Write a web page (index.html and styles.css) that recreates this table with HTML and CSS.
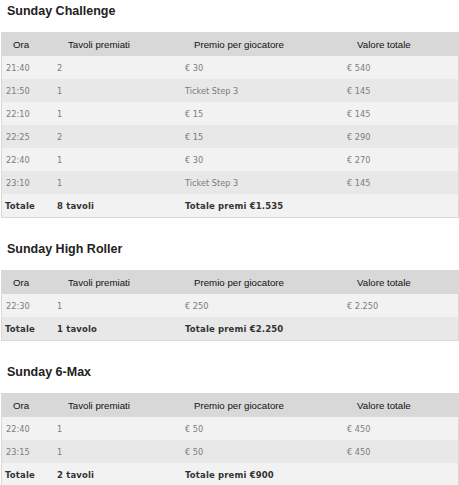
FILE: index.html
```html
<!DOCTYPE html>
<html lang="it">
<head>
<meta charset="utf-8">
<title>Sunday</title>
<link rel="stylesheet" href="styles.css">
</head>
<body>
<section class="block">
  <h2 class="title">Sunday Challenge</h2>
  <div class="tbl">
    <div class="row head"><span>Ora</span><span>Tavoli premiati</span><span>Premio per giocatore</span><span>Valore totale</span></div>
    <div class="row"><span>21:40</span><span>2</span><span>€ 30</span><span>€ 540</span></div>
    <div class="row"><span>21:50</span><span>1</span><span>Ticket Step 3</span><span>€ 145</span></div>
    <div class="row"><span>22:10</span><span>1</span><span>€ 15</span><span>€ 145</span></div>
    <div class="row"><span>22:25</span><span>2</span><span>€ 15</span><span>€ 290</span></div>
    <div class="row"><span>22:40</span><span>1</span><span>€ 30</span><span>€ 270</span></div>
    <div class="row"><span>23:10</span><span>1</span><span>Ticket Step 3</span><span>€ 145</span></div>
    <div class="row total"><span>Totale</span><span>8 tavoli</span><span>Totale premi €1.535</span><span></span></div>
  </div>
</section>
<section class="block">
  <h2 class="title">Sunday High Roller</h2>
  <div class="tbl">
    <div class="row head"><span>Ora</span><span>Tavoli premiati</span><span>Premio per giocatore</span><span>Valore totale</span></div>
    <div class="row"><span>22:30</span><span>1</span><span>€ 250</span><span>€ 2.250</span></div>
    <div class="row total"><span>Totale</span><span>1 tavolo</span><span>Totale premi €2.250</span><span></span></div>
  </div>
</section>
<section class="block">
  <h2 class="title">Sunday 6-Max</h2>
  <div class="tbl">
    <div class="row head"><span>Ora</span><span>Tavoli premiati</span><span>Premio per giocatore</span><span>Valore totale</span></div>
    <div class="row"><span>22:40</span><span>1</span><span>€ 50</span><span>€ 450</span></div>
    <div class="row"><span>23:15</span><span>1</span><span>€ 50</span><span>€ 450</span></div>
    <div class="row total"><span>Totale</span><span>2 tavoli</span><span>Totale premi €900</span><span></span></div>
  </div>
</section>
</body>
</html>
```

FILE: styles.css
```css
html, body {
  margin: 0;
  padding: 0;
  background: #ffffff;
}
body {
  padding-top: 3px;
  overflow: hidden;
  font-family: "DejaVu Sans", Verdana, sans-serif;
}
.block {
  margin-bottom: 23px;
}
.title {
  margin: 0 0 13px 0;
  padding-left: 7px;
  font-family: "Liberation Sans", Arial, sans-serif;
  font-weight: bold;
  font-size: 12.5px;
  line-height: 16px;
  color: #222222;
}
.tbl {
  margin-left: 1px;
  border: 1px solid #d9d9d9;
  border-top: 0;
}
.row {
  display: grid;
  grid-template-columns: 52px 128px 162px 1fr;
  height: 23px;
  align-items: center;
  font-size: 8.2px;
  color: #7c7c7c;
  background: #f3f2f2;
}
.row:nth-child(odd) {
  background: #e8e8e8;
}
.row span {
  padding-left: 3px;
  white-space: nowrap;
}
.row span:nth-child(1) {
  padding-left: 4px;
}
.row.head {
  height: 24px;
  background: #d8d8d8;
  font-family: "Liberation Sans", Arial, sans-serif;
  font-size: 9.7px;
  color: #111111;
}
.row.head span:nth-child(1) { padding-left: 11px; }
.row.head span:nth-child(2) { padding-left: 14px; }
.row.head span:nth-child(3) { padding-left: 12px; }
.row.head span:nth-child(4) { padding-left: 13px; }
.row.total {
  font-weight: bold;
  font-size: 8.5px;
  letter-spacing: 0.15px;
  color: #333333;
}
.row.total span:nth-child(1) { padding-left: 3px; }
```
